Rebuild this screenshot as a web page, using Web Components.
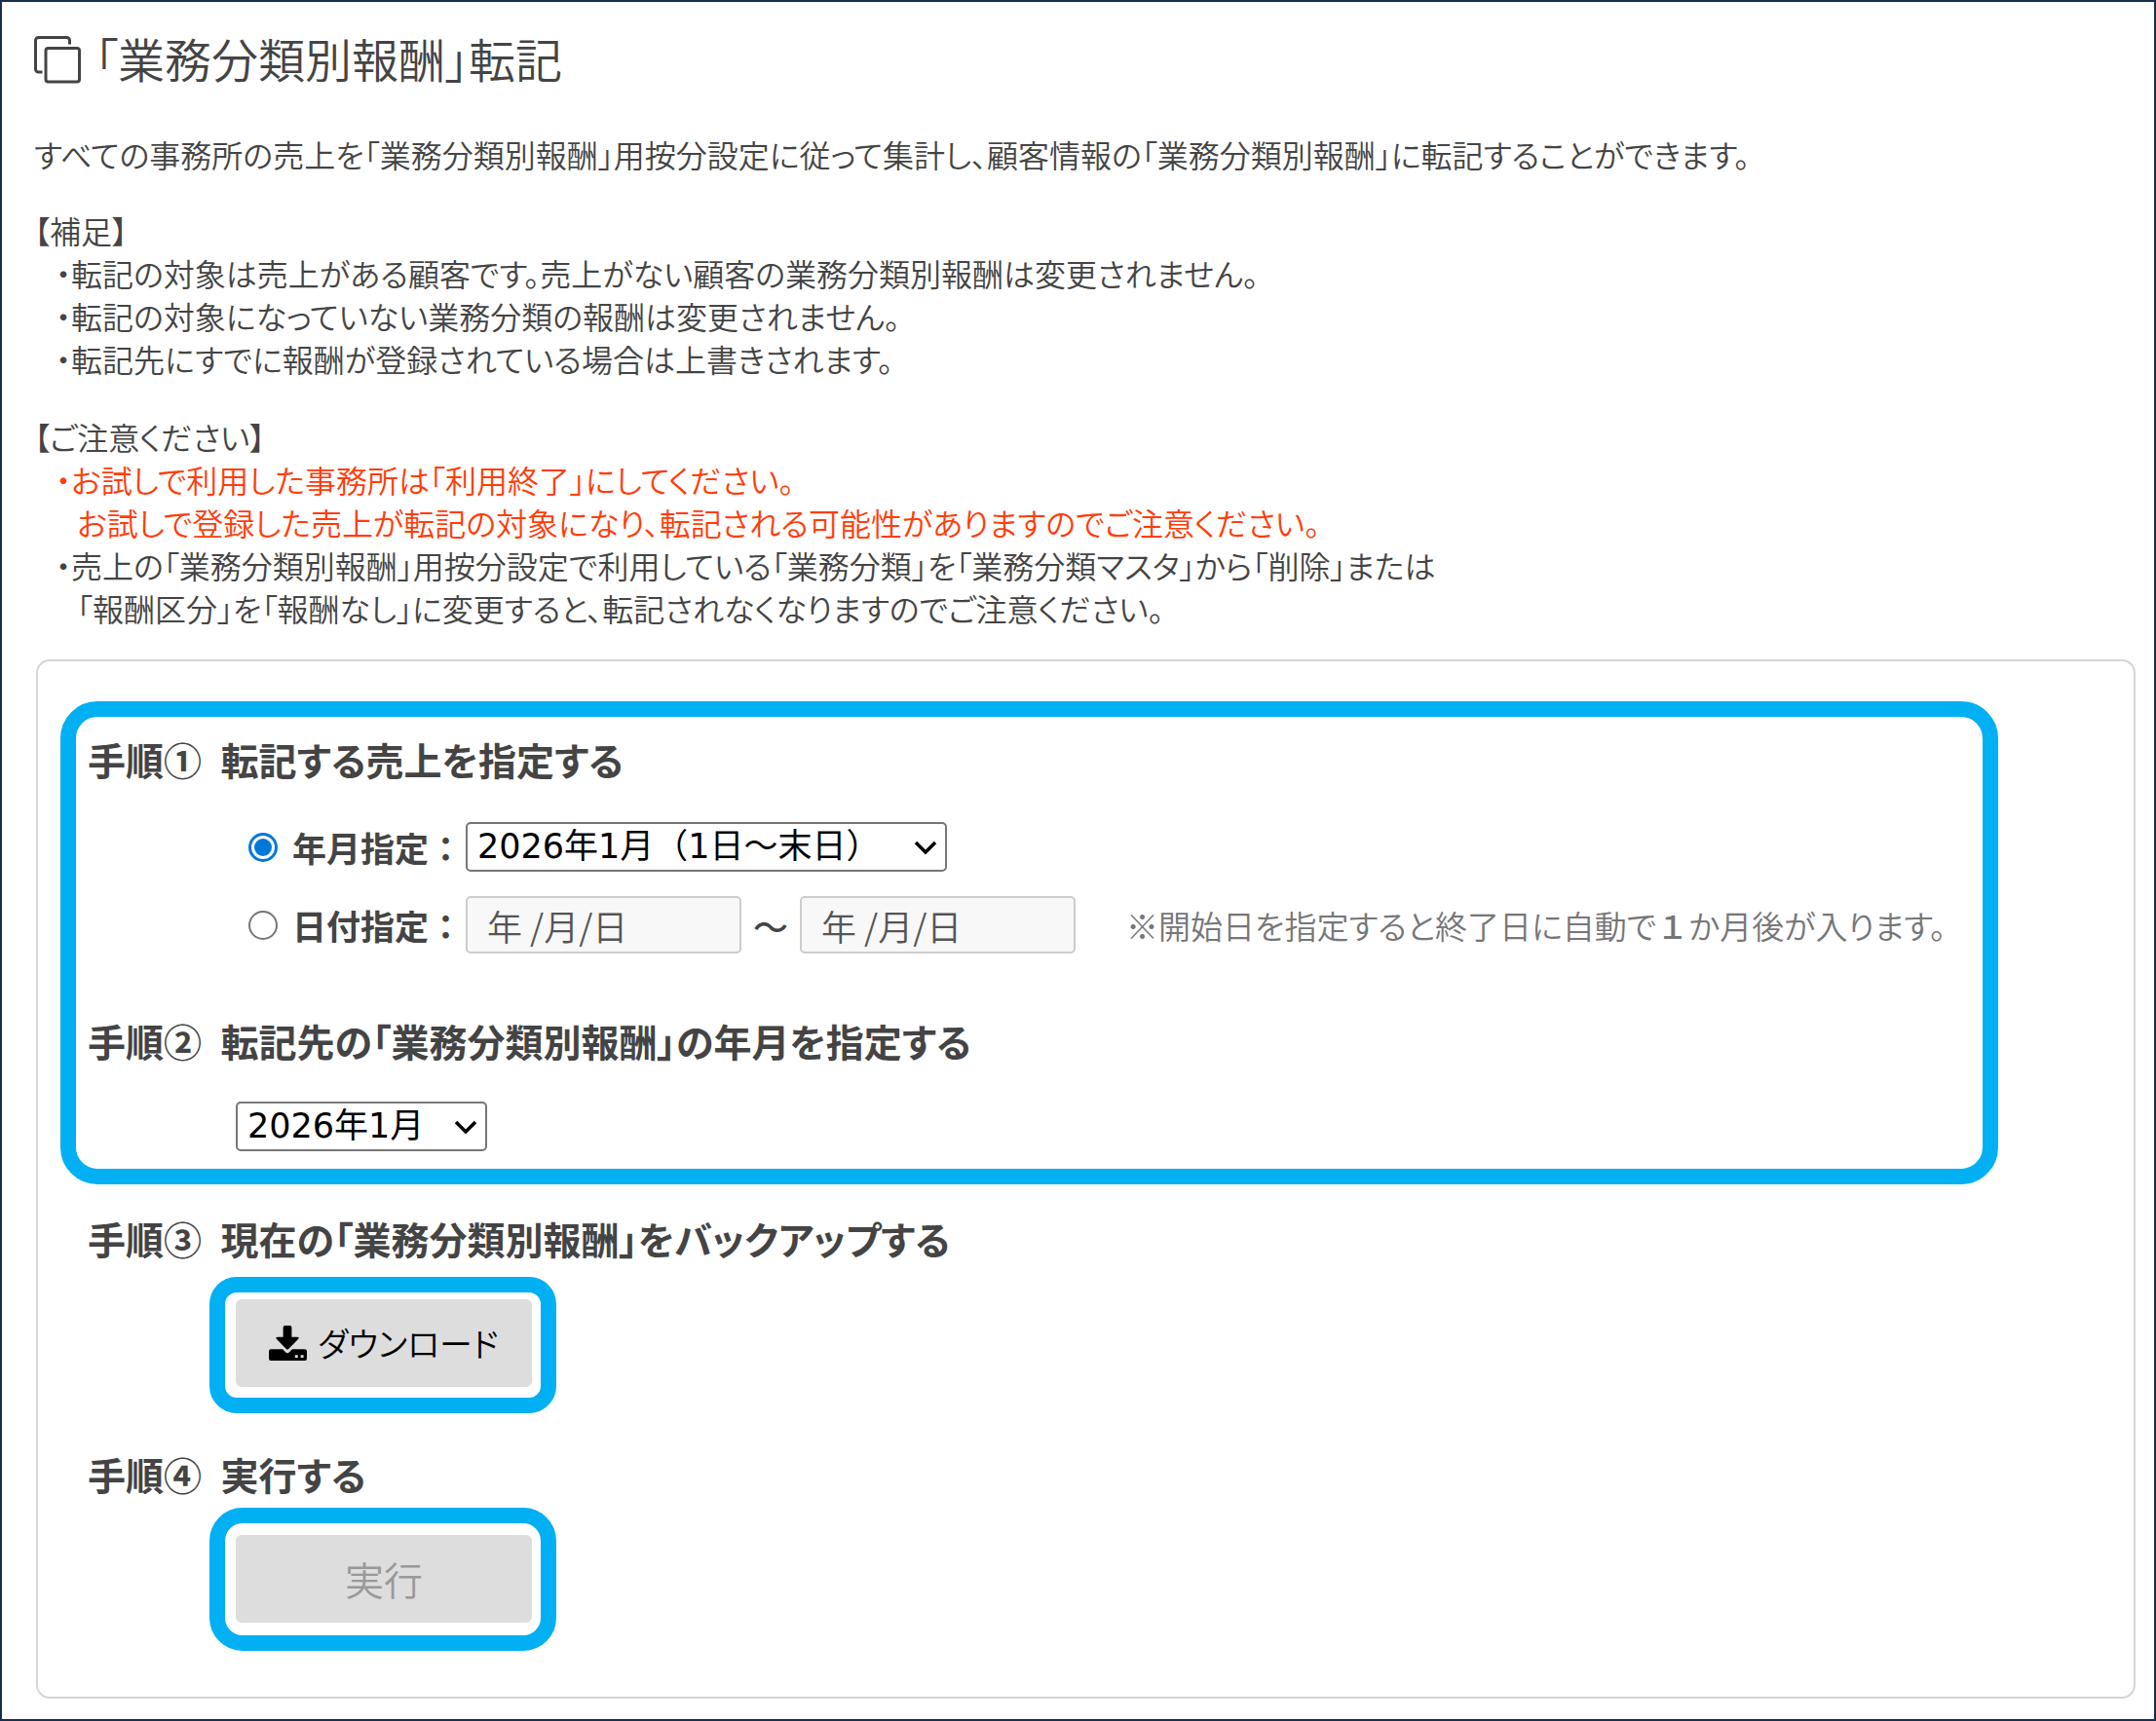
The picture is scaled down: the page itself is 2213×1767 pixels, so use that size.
<!DOCTYPE html>
<html lang="ja">
<head>
<meta charset="utf-8">
<title>「業務分類別報酬」転記</title>
<style>
html {
	height: 100%;
}
body {
	--text-colour: #444;
	--font-ui: "Noto Sans CJK JP", sans-serif;
	background: #fff;
	border: 2px solid #182d52;
	box-sizing: border-box;
	color: var(--text-colour);
	font-family: var(--font-ui);
	font-feature-settings: "palt";
	margin: 0;
	min-height: 100%;
}
</style>
</head>
<body>
<transfer-page></transfer-page>

<template id="page-template">
	<style>
		:host {
			display: block;
			font-size: 32px;
			font-weight: 350;
			line-height: 44px;
			padding: 19px 19px 21px 33px;
		}
		p {
			margin: 39px 0 34px;
		}
		note-block + note-block {
			margin-top: 36px;
		}
		transfer-form {
			margin-top: 31px;
		}
		.warning {
			color: #ff3d0a;
		}
		.continued {
			display: block;
			padding-left: 22px;
		}
	</style>
	<page-title>「業務分類別報酬」転記</page-title>
	<p>すべての事務所の売上を「業務分類別報酬」用按分設定に従って集計し、顧客情報の「業務分類別報酬」に転記することができます。</p>
	<note-block heading="【補足】">
		<div>・転記の対象は売上がある顧客です。売上がない顧客の業務分類別報酬は変更されません。</div>
		<div>・転記の対象になっていない業務分類の報酬は変更されません。</div>
		<div>・転記先にすでに報酬が登録されている場合は上書きされます。</div>
	</note-block>
	<note-block heading="【ご注意ください】">
		<div class="warning">・お試しで利用した事務所は「利用終了」にしてください。<span class="continued">お試しで登録した売上が転記の対象になり、転記される可能性がありますのでご注意ください。</span></div>
		<div>・売上の「業務分類別報酬」用按分設定で利用している「業務分類」を「業務分類マスタ」から「削除」または<span class="continued">「報酬区分」を「報酬なし」に変更すると、転記されなくなりますのでご注意ください。</span></div>
	</note-block>
	<transfer-form></transfer-form>
</template>

<template id="title-template">
	<style>
		:host {
			display: flex;
			align-items: center;
			gap: 12px;
		}
		svg {
			flex: none;
			height: 50px;
			margin-top: 4px;
			width: 50px;
		}
		h1 {
			font-size: 48px;
			font-weight: 350;
			line-height: 76px;
			margin: 0;
		}
	</style>
	<svg viewBox="0 0 50 50" fill="none" stroke="currentColor" stroke-width="3" aria-hidden="true">
		<path d="M36.500 9.500V5.500a3 3 0 0 0-3-3H4.500a3 3 0 0 0-3 3V35a3 3 0 0 0 3 3H8.500"/>
		<rect x="12" y="13.500" width="34.500" height="34.500" rx="2.500"/>
	</svg>
	<h1><slot></slot></h1>
</template>

<template id="note-template">
	<style>
		:host {
			display: block;
		}
		h2 {
			font: inherit;
			margin: 0;
		}
		.items {
			padding-left: 22px;
		}
	</style>
	<h2></h2>
	<div class="items"><slot></slot></div>
</template>

<template id="frame-template">
	<style>
		:host {
			border: 16px solid #00b0f3;
			border-radius: var(--frame-radius, 34px);
			box-sizing: border-box;
			display: block;
		}
	</style>
	<slot></slot>
</template>

<template id="step-template">
	<style>
		:host {
			display: block;
		}
		h3 {
			font-size: 39px;
			font-weight: 700;
			line-height: 60px;
			margin: 0;
		}
	</style>
	<h3></h3>
	<slot></slot>
</template>

<template id="select-template">
	<style>
		:host {
			display: inline-grid;
		}
		select, svg {
			grid-area: 1 / 1;
		}
		select {
			appearance: none;
			background: #fff;
			border: 2px solid #767676;
			border-radius: 5px;
			box-sizing: border-box;
			color: #000;
			font: 400 35px/47px "DejaVu Sans", "Noto Sans CJK JP", sans-serif;
			font-feature-settings: normal;
			height: 51px;
			margin: 0;
			padding: 0 10px;
		}
		svg {
			align-self: center;
			height: 16px;
			justify-self: end;
			margin-right: 10px;
			pointer-events: none;
			width: 24px;
		}
	</style>
	<select></select>
	<svg viewBox="0 0 24 16" fill="none" stroke="#000" stroke-width="3.500" aria-hidden="true">
		<path d="M2 3l10 10L22 3"/>
	</svg>
</template>

<template id="form-template">
	<style>
		:host {
			border: 2px solid #d5d5d5;
			border-radius: 14px;
			display: block;
			margin-left: 2px;
			padding: 41px 139px 47px 23px;
		}
		* {
			box-sizing: border-box;
		}
		.targets {
			--frame-radius: 38px;
			padding: 13px 0 18px 12px;
		}
		.row {
			align-items: center;
			display: grid;
			grid-template-columns: 45px 178px auto 1fr;
			padding-left: 165px;
		}
		.month {
			height: 51px;
			margin: 35px 0 25px;
		}
		.month ui-select {
			width: 494px;
		}
		.row label {
			font-size: 35px;
			font-feature-settings: normal;
			font-weight: 700;
			white-space: nowrap;
		}
		input[type="radio"] {
			appearance: none;
			border: 2px solid #767676;
			border-radius: 50%;
			height: 30px;
			margin: 0;
			width: 30px;
		}
		input[type="radio"]:checked {
			background: #0078d7 content-box;
			border: 3px solid #0078d7;
			padding: 3px;
		}
		.dates {
			align-items: center;
			display: flex;
			font-size: 36px;
			gap: 12px;
		}
		.dates span {
			font-weight: 500;
		}
		.dates input {
			background: #f8f8f8;
			border: 2px solid #ccc;
			border-radius: 5px;
			color: #555;
			font: inherit;
			font-feature-settings: normal;
			height: 59px;
			padding: 0 20px;
			width: 283px;
		}
		.hint {
			color: #767676;
			font-size: 33px;
			padding-left: 52px;
			white-space: nowrap;
		}
		.hint b {
			font-feature-settings: normal;
			font-weight: 500;
		}
		.second {
			padding-top: 59px;
		}
		.second ui-select {
			margin: 33px 0 0 152px;
			vertical-align: top;
			width: 258px;
		}
		.after {
			padding-left: 28px;
		}
		.third {
			padding-top: 25px;
		}
		.fourth {
			padding-top: 32px;
		}
		highlight-frame.action {
			margin-left: 125px;
			width: 356px;
		}
		.download {
			--frame-radius: 28px;
			margin-top: 10px;
			padding: 7px 9px 11px 11px;
		}
		.run {
			margin-top: 5px;
			padding: 12px 9px 13px 11px;
		}
		button {
			align-items: center;
			background: #ddd;
			border: 0;
			border-radius: 6px;
			color: #000;
			display: flex;
			font: inherit;
			font-feature-settings: inherit;
			font-size: 40px;
			gap: 11px;
			height: 90px;
			justify-content: center;
			padding: 0;
			width: 100%;
		}
		button:disabled {
			color: #999;
		}
		button span {
			font-size: 34px;
		}
		button svg {
			height: 37px;
			width: 39px;
		}
	</style>
	<highlight-frame class="targets">
		<form-step heading="手順①&ensp;転記する売上を指定する">
			<div class="row month">
				<input type="radio" name="mode" id="by-month" checked>
				<label for="by-month">年月指定：</label>
				<ui-select label="年月指定" value="2026年1月（1日～末日）"></ui-select>
			</div>
			<div class="row">
				<input type="radio" name="mode" id="by-date">
				<label for="by-date">日付指定：</label>
				<div class="dates">
					<input type="text" aria-label="開始日" value="年 /月/日" disabled>
					<span>～</span>
					<input type="text" aria-label="終了日" value="年 /月/日" disabled>
				</div>
				<div class="hint">※開始日を指定すると終了日に自動で<b>１</b>か月後が入ります。</div>
			</div>
		</form-step>
		<form-step class="second" heading="手順②&ensp;転記先の「業務分類別報酬」の年月を指定する">
			<ui-select label="転記先の年月" value="2026年1月"></ui-select>
		</form-step>
	</highlight-frame>
	<div class="after">
		<form-step class="third" heading="手順③&ensp;現在の「業務分類別報酬」をバックアップする">
			<highlight-frame class="action download">
				<button type="button">
					<svg viewBox="0 0 40 38" fill="currentColor" aria-hidden="true">
						<path d="M15 2q0-2 2-2h5q2 0 2 2v10h6q2.500 0 1 2L20.500 25q-1 1-2 0L8 14q-1.500-2 1-2h6z"/>
						<path fill-rule="evenodd" d="M2 25H14.500l3 3q2 2 4 0l3-3H38q2 0 2 2v8q0 2-2 2H2Q0 37 0 35v-8Q0 25 2 25zM27.500 31v3h3v-3zM33.500 31v3h3v-3z"/>
					</svg>
					<span>ダウンロード</span>
				</button>
			</highlight-frame>
		</form-step>
		<form-step class="fourth" heading="手順④&ensp;実行する">
			<highlight-frame class="action run">
				<button type="button" disabled>実行</button>
			</highlight-frame>
		</form-step>
	</div>
</template>

<script>
class TemplateElement extends HTMLElement {
  constructor(templateId) {
    super();

    const shadowRoot = this.attachShadow({ mode: "open" });
    const template = document.getElementById(templateId);
    shadowRoot.appendChild(template.content.cloneNode(true));
  }
}

class PageTitle extends TemplateElement {
  constructor() {
    super("title-template");
  }
}

class NoteBlock extends TemplateElement {
  constructor() {
    super("note-template");
  }

  connectedCallback() {
    this.shadowRoot.querySelector("h2").textContent =
      this.getAttribute("heading");
  }
}

class HighlightFrame extends TemplateElement {
  constructor() {
    super("frame-template");
  }
}

class FormStep extends TemplateElement {
  constructor() {
    super("step-template");
  }

  connectedCallback() {
    this.shadowRoot.querySelector("h3").textContent =
      this.getAttribute("heading");
  }
}

class UiSelect extends TemplateElement {
  constructor() {
    super("select-template");
  }

  connectedCallback() {
    const select = this.shadowRoot.querySelector("select");
    select.setAttribute("aria-label", this.getAttribute("label"));
    select.replaceChildren(new Option(this.getAttribute("value")));
  }
}

class TransferForm extends TemplateElement {
  constructor() {
    super("form-template");
  }
}

class TransferPage extends TemplateElement {
  constructor() {
    super("page-template");
  }
}

window.customElements.define("page-title", PageTitle);
window.customElements.define("note-block", NoteBlock);
window.customElements.define("highlight-frame", HighlightFrame);
window.customElements.define("form-step", FormStep);
window.customElements.define("ui-select", UiSelect);
window.customElements.define("transfer-form", TransferForm);
window.customElements.define("transfer-page", TransferPage);
</script>
</body>
</html>
